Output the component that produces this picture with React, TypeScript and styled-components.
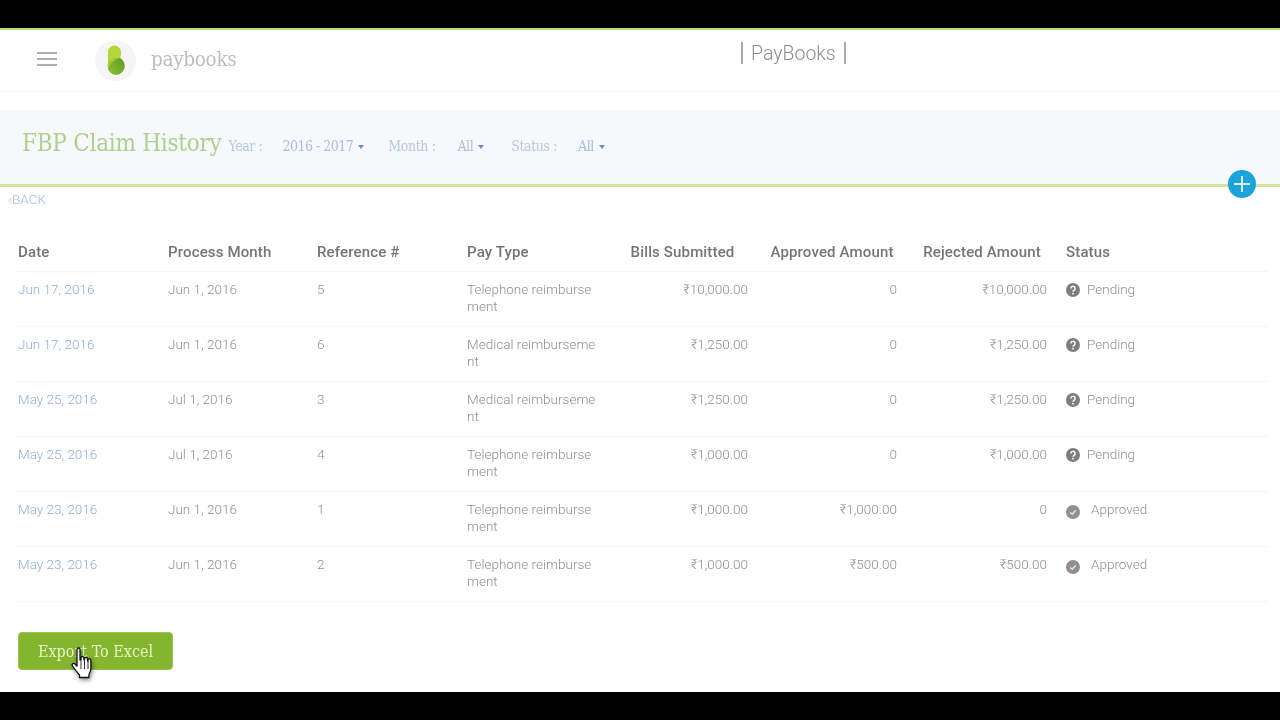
import React from "react"
import styled, { createGlobalStyle } from "styled-components"

const GlobalStyle = createGlobalStyle`
  html, body {
    margin: 0;
    padding: 0;
    background: #000;
  }
  body {
    font-family: "Roboto", "Liberation Sans", sans-serif;
  }
`

const slab = `"DejaVu Serif", "Liberation Serif", serif`

const Frame = styled.div`
  width: 1280px;
  height: 720px;
  display: flex;
  flex-direction: column;
  overflow: hidden;
  background: #000;
`

const Letterbox = styled.div<{ $height: number }>`
  height: ${p => p.$height}px;
  flex: none;
  background: #000;
`

const Screen = styled.main`
  position: relative;
  flex: 1;
  display: flex;
  flex-direction: column;
  background: #fff;
  border-top: 2px solid #b5dc76;
  filter: blur(0.45px);
`

//#region Header

const Header = styled.header`
  height: 61px;
  flex: none;
  display: flex;
  align-items: flex-start;
  border-bottom: 1px solid #f8f8f8;
`

const Brand = styled.div`
  width: 741px;
  height: 60px;
  flex: none;
  display: flex;
  align-items: center;
  padding-left: 37px;
  box-sizing: border-box;
`

const Burger = styled.div`
  width: 20px;
  display: flex;
  flex-direction: column;
  gap: 4px;
  margin: -2px 38px 0 0;
  span {
    height: 2px;
    background: #b0b0b0;
  }
`

const LogoDisc = styled.div`
  width: 41px;
  height: 41px;
  border-radius: 50%;
  background: #f5f5f7;
  display: flex;
  align-items: center;
  justify-content: center;
  margin-right: 15px;
`

const LogoWord = styled.div`
  margin-top: -3px;
  font-family: ${slab};
  font-stretch: condensed;
  font-size: 20.500px;
  letter-spacing: -0.3px;
  color: #bdbdbd;
`

const AppTitle = styled.div`
  margin-top: 12px;
  height: 22px;
  display: flex;
  align-items: center;
  padding: 0 8px;
  border-left: 2px solid #a9a9b0;
  border-right: 2px solid #a9a9b0;
  font-size: 19.500px;
  font-weight: 300;
  color: #8d8d93;
`

const Logo = () => (
  <LogoDisc>
    <svg width="18" height="30" viewBox="0 0 18 30">
      <defs>
        <linearGradient id="lower" x1="0" y1="1" x2="1" y2="0">
          <stop offset="0" stopColor="#8fc031" />
          <stop offset="1" stopColor="#5c9a26" />
        </linearGradient>
      </defs>
      <path d="M1 7a6.500 6.500 0 0 1 13 0c0 2 0 4-1 6l4 4-16 6z" fill="#b6d638" />
      <circle cx="9" cy="21" r="8.500" fill="#a3cb35" />
      <path d="M1.200 24.500A8.500 8.500 0 0 0 17 18c-1-3-2.500-4-4-5-5 1-10 5-11.800 11.500z" fill="url(#lower)" />
    </svg>
  </LogoDisc>
)

//#endregion

//#region Filter panel

const Panel = styled.section`
  margin-top: 18px;
  height: 74px;
  flex: none;
  display: flex;
  align-items: flex-start;
  padding: 18px 0 0 22px;
  box-sizing: border-box;
  background: #f6f8fc;
`

const PageTitle = styled.h1`
  margin: 0 7px 0 0;
  font-family: ${slab};
  font-stretch: condensed;
  font-size: 24px;
  font-weight: 400;
  line-height: 30px;
  letter-spacing: -0.25px;
  color: #aed08c;
`

const FilterText = styled.span<{ $gap: number }>`
  margin: 10px ${p => p.$gap}px 0 0;
  font-family: ${slab};
  font-stretch: condensed;
  font-size: 14px;
  line-height: 16px;
  letter-spacing: -0.4px;
  color: #b9c9e0;
`

const FilterValue = styled(FilterText)`
  letter-spacing: -0.5px;
  color: #a9bddd;
  &::after {
    content: "";
    display: inline-block;
    margin-left: 5px;
    vertical-align: 2px;
    border-left: 3.500px solid transparent;
    border-right: 3.500px solid transparent;
    border-top: 4px solid #6f8fbf;
  }
`

const Rule = styled.div`
  height: 3px;
  flex: none;
  background: #d4e49c;
`

const AddButton = styled.button`
  position: absolute;
  left: 1228px;
  top: 140px;
  width: 28px;
  height: 28px;
  padding: 0;
  border: 0;
  border-radius: 50%;
  background: #1ba3dc;
  display: flex;
  align-items: center;
  justify-content: center;
`

const BackLink = styled.a`
  display: block;
  margin: 4px 0 0 8px;
  height: 16px;
  font-size: 13.500px;
  font-weight: 300;
  line-height: 16px;
  color: #a9bcdc;
`

//#endregion

//#region Table

const Table = styled.div`
  margin: 30px 13px 0 17px;
`

const Row = styled.div<{ $head?: boolean }>`
  display: grid;
  grid-template-columns: 150px 150px 150px 150px 131px 149px 150px 1fr;
  height: ${p => (p.$head ? 35 : 55)}px;
  box-sizing: border-box;
  padding-top: ${p => (p.$head ? 6 : 9)}px;
  border-bottom: 1px solid #f4f4f4;
  font-size: 13.500px;
  line-height: 17px;
  font-weight: 300;
  color: #8f8f8f;
`

const HeadCell = styled.div<{ $center?: boolean; $inset?: number }>`
  font-size: 15px;
  font-weight: 500;
  line-height: 18px;
  letter-spacing: 0.15px;
  white-space: nowrap;
  color: #757575;
  text-align: ${p => (p.$center ? "center" : "left")};
  padding-left: ${p => p.$inset ?? 0}px;
`

const DateLink = styled.a`
  padding-left: 1px;
  color: #8fadda;
`

const Plain = styled.div<{ $inset?: number }>`
  padding-left: ${p => p.$inset ?? 0}px;
`

const PayType = styled.div`
  width: 132px;
  word-break: break-all;
`

const Amount = styled.div`
  text-align: right;
`

const StatusCell = styled.div<{ $gap: number }>`
  display: flex;
  align-items: flex-start;
  gap: ${p => p.$gap}px;
  padding-left: 19px;
  svg {
    flex: none;
    margin-top: 2px;
  }
`

const PendingIcon = () => (
  <svg width="14" height="14" viewBox="0 0 14 14">
    <circle cx="7" cy="7" r="7" fill="#807c7c" />
    <path d="M4.900 5.400a2.100 2.100 0 1 1 3.100 1.900c-.7.400-1 .7-1 1.500" fill="none" stroke="#fff" strokeWidth="1.500" />
    <circle cx="7" cy="10.700" r=".9" fill="#fff" />
  </svg>
)

const ApprovedIcon = () => (
  <svg width="14" height="14" viewBox="0 0 14 14" style={{ marginTop: 4 }}>
    <circle cx="7" cy="7" r="7" fill="#948e8e" />
    <path d="M4.200 7.400l2 1.900 3.600-4" fill="none" stroke="#e4e4e4" strokeWidth="1.400" />
  </svg>
)

type Claim = {
  date: string
  month: string
  ref: number
  payType: string
  bills: string
  approved: string
  rejected: string
  status: "Pending" | "Approved"
}

const claims: Claim[] = [
  { date: "Jun 17, 2016", month: "Jun 1, 2016", ref: 5, payType: "Telephone reimbursement", bills: "₹10,000.00", approved: "0", rejected: "₹10,000.00", status: "Pending" },
  { date: "Jun 17, 2016", month: "Jun 1, 2016", ref: 6, payType: "Medical reimbursement", bills: "₹1,250.00", approved: "0", rejected: "₹1,250.00", status: "Pending" },
  { date: "May 25, 2016", month: "Jul 1, 2016", ref: 3, payType: "Medical reimbursement", bills: "₹1,250.00", approved: "0", rejected: "₹1,250.00", status: "Pending" },
  { date: "May 25, 2016", month: "Jul 1, 2016", ref: 4, payType: "Telephone reimbursement", bills: "₹1,000.00", approved: "0", rejected: "₹1,000.00", status: "Pending" },
  { date: "May 23, 2016", month: "Jun 1, 2016", ref: 1, payType: "Telephone reimbursement", bills: "₹1,000.00", approved: "₹1,000.00", rejected: "0", status: "Approved" },
  { date: "May 23, 2016", month: "Jun 1, 2016", ref: 2, payType: "Telephone reimbursement", bills: "₹1,000.00", approved: "₹500.00", rejected: "₹500.00", status: "Approved" },
]

//#endregion

//#region Export

const ExportButton = styled.button`
  display: block;
  margin: 30px 0 0 18px;
  width: 155px;
  height: 38px;
  padding: 0;
  border: 1px solid #98c44c;
  border-radius: 4px;
  background: #84b52f;
  font-family: ${slab};
  font-stretch: condensed;
  font-size: 16px;
  color: #e6f7c4;
`

const Cursor = styled.svg`
  position: absolute;
  left: 71px;
  top: 617px;
  filter: drop-shadow(1px 2px 2px rgba(0, 0, 0, 0.45));
`

//#endregion

const App = () => (
  <Frame>
    <GlobalStyle />
    <Letterbox $height={28} />
    <Screen>
      <Header>
        <Brand>
          <Burger><span /><span /><span /></Burger>
          <Logo />
          <LogoWord>paybooks</LogoWord>
        </Brand>
        <AppTitle>PayBooks</AppTitle>
      </Header>

      <Panel>
        <PageTitle>FBP Claim History</PageTitle>
        <FilterText $gap={20}>Year :</FilterText>
        <FilterValue $gap={24}>2016 - 2017</FilterValue>
        <FilterText $gap={22}>Month :</FilterText>
        <FilterValue $gap={27}>All</FilterValue>
        <FilterText $gap={21}>Status :</FilterText>
        <FilterValue $gap={0}>All</FilterValue>
      </Panel>
      <Rule />
      <AddButton aria-label="Add">
        <svg width="18" height="18" viewBox="0 0 18 18">
          <path d="M9 1v16M1 9h16" stroke="#d8f1fb" strokeWidth="2" />
        </svg>
      </AddButton>
      <BackLink>‹BACK</BackLink>

      <Table>
        <Row $head>
          <HeadCell $inset={1}>Date</HeadCell>
          <HeadCell $inset={1}>Process Month</HeadCell>
          <HeadCell>Reference #</HeadCell>
          <HeadCell>Pay Type</HeadCell>
          <HeadCell $center>Bills Submitted</HeadCell>
          <HeadCell $center $inset={19}>Approved Amount</HeadCell>
          <HeadCell $center $inset={20}>Rejected Amount</HeadCell>
          <HeadCell $inset={19}>Status</HeadCell>
        </Row>
        {claims.map(c => (
          <Row key={c.ref}>
            <DateLink>{c.date}</DateLink>
            <Plain $inset={1}>{c.month}</Plain>
            <Plain>{c.ref}</Plain>
            <PayType>{c.payType}</PayType>
            <Amount>{c.bills}</Amount>
            <Amount>{c.approved}</Amount>
            <Amount>{c.rejected}</Amount>
            <StatusCell $gap={c.status === "Pending" ? 7 : 11}>
              {c.status === "Pending" ? <PendingIcon /> : <ApprovedIcon />}
              {c.status}
            </StatusCell>
          </Row>
        ))}
      </Table>

      <ExportButton>Export To Excel</ExportButton>
      <Cursor width="22" height="32" viewBox="0 0 22 32">
        <path
          d="M6 2.500c0-2 3-2 3 0V13l1 0v-2c0-1.800 3-1.800 3 0v2h.6v-1.300c0-1.700 2.900-1.700 2.900 0V14h.5v-.8c0-1.700 2.900-1.700 2.900 0V21c0 3-1 5-2 7v2.500H8.500V28C6 25 3.500 22 1.500 19c-1.300-2 1-3.500 2.500-2l2 2z"
          fill="#fff"
          stroke="#111"
          strokeWidth="1.300"
          strokeLinejoin="round"
        />
        <path d="M10 14v8M13.500 14v8M17 14.500v7.500" stroke="#333" strokeWidth="1" />
      </Cursor>
    </Screen>
    <Letterbox $height={28} />
  </Frame>
)

export default App
